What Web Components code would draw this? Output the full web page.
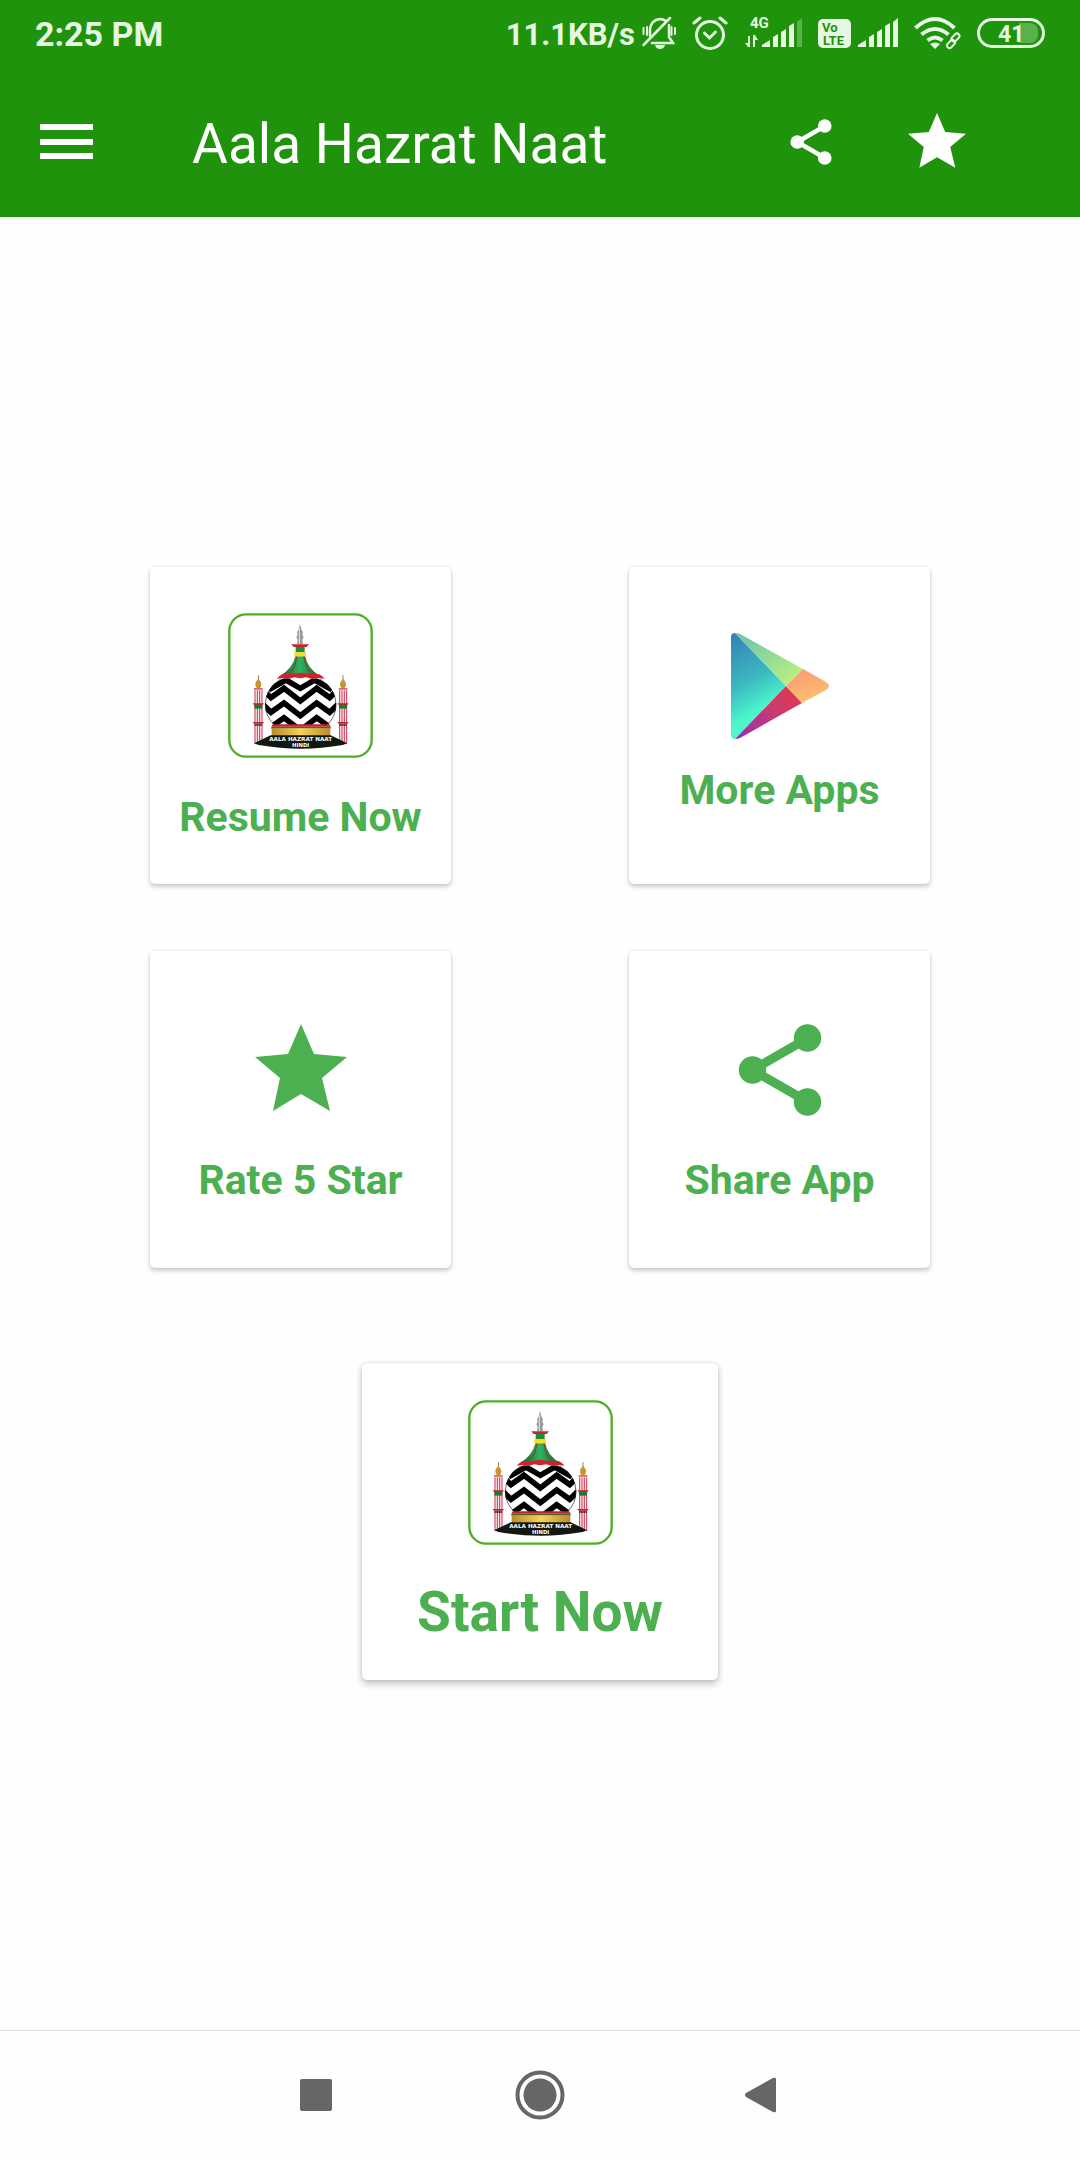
<!DOCTYPE html>
<html lang="en">
<head>
<meta charset="utf-8">
<meta name="viewport" content="width=device-width, initial-scale=1">
<title>Aala Hazrat Naat</title>
<style>
    html, body {
        margin: 0;
        height: 100%;
    }
    body {
        background: #fefefe;
        font-family: Roboto, "Noto Sans", sans-serif;
    }
</style>
</head>
<body>
<home-screen></home-screen>

<script>
const STAR = '<path d="M46 0l13 30 33 3-25 21 8 33-29-17-28 17 7-33L0 33l33-3z"/>';

const SHARE = `
    <path d="M18.500 46L74 14M18.500 46L74 78" stroke="currentColor" stroke-width="9" fill="none"/>
    <circle cx="18.500" cy="46" r="13.700"/>
    <circle cx="73.500" cy="14" r="13.700"/>
    <circle cx="73.500" cy="78" r="13.700"/>`;

const SIGNAL = `
    <path d="M0 29v-2l8-5v7z"/>
    <path d="M11 29V19l5-3v13z"/>
    <path d="M19 29V14l5-3v18z"/>
    <path d="M27 29V8l5-3v24z"/>`;

/**
 * Status bar: clock on the left, network and battery on the right
 */
class StatusBar extends HTMLElement {
    constructor() {
        super();
        this.attachShadow({ mode: 'open' });
    }

    connectedCallback() {
        this.shadowRoot.innerHTML = `
            <style>
                :host {
                    display: flex;
                    align-items: center;
                    justify-content: space-between;
                    height: 66px;
                    padding: 0 35px;
                    background: #1e930b;
                    color: #e6f8e2;
                    font-weight: 700;
                    white-space: nowrap;
                }
                .clock, .speed { padding-top: 2px; }
                .clock { font-size: 34px; }
                .speed { font-size: 31px; }
                .tray, .group {
                    display: flex;
                    align-items: center;
                }
                .tray { gap: 16px; }
                .group { gap: 7px; }
                svg {
                    display: block;
                    fill: currentColor;
                    font-family: Roboto, sans-serif;
                }
            </style>
            <span class="clock">2:25 PM</span>
            <div class="tray">
                <div class="group">
                    <span class="speed">11.1KB/s</span>
                    <svg width="34" height="34" viewBox="0 0 34 34" aria-label="Silent">
                        <g fill="none" stroke="currentColor" stroke-width="2.500" stroke-linecap="round">
                            <path d="M8 20v-7q1-9 10-10 3 0 6 2M27 9v12l4 6H10"/>
                            <path d="M1.500 29L28 2"/>
                            <path d="M1.500 12v6M5 11v8M29.500 11v8M33 12v6" stroke-width="2"/>
                        </g>
                        <path d="M13 29h10q-1 4-5 4t-5-4z"/>
                    </svg>
                </div>
                <svg width="36" height="34" viewBox="0 0 36 34" aria-label="Alarm">
                    <g fill="none" stroke="currentColor" stroke-width="3" stroke-linecap="round">
                        <circle cx="18" cy="19" r="13.500"/>
                        <path d="M2 7l6-5M34 7l-6-5"/>
                        <path d="M12.500 17l5 5 6-6"/>
                    </g>
                </svg>
                <svg width="58" height="42" viewBox="-1 -4 58 42" aria-label="Mobile network">
                    <text x="5" y="12" font-size="15" font-weight="700">4G</text>
                    <path d="M3 20h2v11H3l-3-4h3zM8 31V19h2l3 5h-3v7z"/>
                    <g transform="translate(17 2)">${SIGNAL}<path d="M35 29V4l5-4v29z" opacity=".3"/></g>
                </svg>
                <div class="group">
                    <svg width="33" height="34" viewBox="0 0 33 34" aria-label="VoLTE">
                        <rect y="3" width="33" height="29" rx="5"/>
                        <g fill="#1e930b" font-size="13" font-weight="700">
                            <text x="4" y="16">Vo</text>
                            <text x="5" y="29">LTE</text>
                        </g>
                    </svg>
                    <svg width="40" height="34" viewBox="0 -2 40 34" aria-label="Signal">${SIGNAL}<path d="M35 29V4l5-4v29z"/></svg>
                </div>
                <svg width="47" height="34" viewBox="0 0 47 34" aria-label="Wi-Fi">
                    <g fill="none" stroke="currentColor" stroke-width="4">
                        <path d="M1.500 12Q21-6 40.500 12"/>
                        <path d="M7.500 18.500q13.500-11 27 0"/>
                        <path d="M13.500 24.500q7.500-6 15 0"/>
                    </g>
                    <path d="M16 28q5-3 10 0l-5 5z"/>
                    <path d="M33 30l12-13" fill="none" stroke="#1e930b" stroke-width="9"/>
                    <g fill="none" stroke="currentColor" stroke-width="2">
                        <rect x="-4.500" y="-2.500" width="9" height="5" rx="2.500" transform="translate(37 28) rotate(-45)"/>
                        <rect x="-4.500" y="-2.500" width="9" height="5" rx="2.500" transform="translate(41.500 21.500) rotate(-45)"/>
                    </g>
                </svg>
                <svg width="68" height="34" viewBox="0 0 68 34" aria-label="Battery">
                    <rect x="1.500" y="3.500" width="65" height="27" rx="13.500" fill="none" stroke="currentColor" stroke-width="3"/>
                    <path d="M42 7h11a8 8 0 0 1 8 8v4a8 8 0 0 1-8 8H42z" opacity=".3"/>
                    <text x="21" y="26" font-size="23" font-weight="700">41</text>
                </svg>
            </div>
        `;
    }
}
customElements.define('status-bar', StatusBar);

/**
 * App bar: menu, slotted title, share and rate actions
 */
class AppBar extends HTMLElement {
    constructor() {
        super();
        this.attachShadow({ mode: 'open' });
    }

    connectedCallback() {
        this.shadowRoot.innerHTML = `
            <style>
                :host {
                    display: flex;
                    align-items: center;
                    height: 151px;
                    padding: 0 80px 0 0;
                    background: #1e930b;
                    color: #fff;
                }
                button {
                    display: flex;
                    align-items: center;
                    justify-content: center;
                    width: 126px;
                    height: 126px;
                    padding: 0;
                    border: 0;
                    background: none;
                    color: inherit;
                    cursor: pointer;
                }
                .menu { width: 133px; }
                svg { fill: currentColor; }
                h1 {
                    flex: 1;
                    margin: 0;
                    padding: 4px 0 0 59px;
                    font-size: 55px;
                    font-weight: 400;
                    white-space: nowrap;
                }
            </style>
            <button class="menu" aria-label="Menu">
                <svg width="53" height="36" viewBox="0 0 53 36"><path d="M0 0h53v6H0zM0 15h53v6H0zM0 29h53v6H0z"/></svg>
            </button>
            <h1><slot></slot></h1>
            <button aria-label="Share">
                <svg width="46" height="46" viewBox="0 0 92 92">${SHARE}</svg>
            </button>
            <button aria-label="Rate">
                <svg width="58" height="58" viewBox="0 0 92 92">${STAR}</svg>
            </button>
        `;
    }
}
customElements.define('app-bar', AppBar);

/**
 * App logo: striped dome between two minarets
 */
class AppLogo extends HTMLElement {
    constructor() {
        super();
        this.attachShadow({ mode: 'open' });
    }

    minaret(x) {
        return `
            <g transform="translate(${x} 0)">
                <path d="M-1 225h2v16h-2z" fill="#54452a"/>
                <path d="M-9 252q0-8 9-17 9 9 9 17 0 9-5 11H-4q-5-2-5-11z" fill="#c8952f"/>
                <path d="M-13 264h26v4h-26z" fill="#c81e2e"/>
                <path d="M-11 268h22v43h-22zM-11 325h22v41h-22zM-12 378h24v52l-10-8-14 6z" fill="#fbe9ec"/>
                <path d="M-10 270v160M-3 270v155M4 270v155M11 270v160" stroke="#cf3550" stroke-width="3"/>
                <path d="M-17 309h34l-4 5h-26zM-17 365h34l-4 5h-26z" fill="#c81e2e"/>
                <path d="M-12 313h24v12h-24z" fill="#1d7a2c"/>
                <path d="M-12 372h24v4h-24z" fill="#222"/>
            </g>`;
    }

    connectedCallback() {
        // y is the height of the peaks of each zigzag band
        const bands = [264, 308, 352].map(y =>
            `<path d="M130 ${y - 8}L167 ${y + 28}L206 ${y}L255 ${y + 38}L304 ${y}L343 ${y + 28}L380 ${y - 8}"/>`
        ).join('');

        this.shadowRoot.innerHTML = `
            <style>
                :host { display: block; }
                svg { display: block; }
            </style>
            <svg width="145" height="145" viewBox="38 38 435 435" role="img" aria-label="Aala Hazrat Naat Hindi">
                <defs>
                    <clipPath id="dome"><path d="M196 234h118q49 32 49 78 0 38-26 62H176q-27-24-27-62 0-46 47-78z"/></clipPath>
                    <linearGradient id="roof">
                        <stop offset="0" stop-color="#185c28"/>
                        <stop offset=".5" stop-color="#2bb560"/>
                        <stop offset="1" stop-color="#185c28"/>
                    </linearGradient>
                    <linearGradient id="gold">
                        <stop offset="0" stop-color="#b98a2b"/>
                        <stop offset=".5" stop-color="#f6d358"/>
                        <stop offset="1" stop-color="#b98a2b"/>
                    </linearGradient>
                </defs>
                <rect x="42" y="42" width="427" height="427" rx="50" fill="#fff" stroke="#4fae27" stroke-width="7"/>
                ${this.minaret(129)}
                ${this.minaret(383)}
                <g clip-path="url(#dome)">
                    <path d="M140 230h230v150H140z" fill="#fff"/>
                    <g fill="none" stroke="#000" stroke-width="17">
                        <path d="M160 268l52-29 43 25 43-25 52 29"/>
                        ${bands}
                    </g>
                </g>
                <path d="M196 236q-46 32-46 76 0 36 26 60M314 236q48 32 48 76 0 36-25 60" fill="none" stroke="#222" stroke-width="2"/>
                <path d="M254 72l5 18 4 5-2 8 4 8-4 8 2 13h-18l2-13-4-8 4-8-2-8 4-5z" fill="#999"/>
                <path d="M252 82v48" stroke="#e8e8e8" stroke-width="3"/>
                <path d="M228 132h53l-7 8h-39z" fill="#cc2230"/>
                <path d="M241 140h27v16h-27z" fill="#1d8a3a"/>
                <path d="M240 168h30q7 38 43 58l-30-2-28-4-28 4-32 2q36-20 45-58z" fill="url(#roof)"/>
                <path d="M244 168q-3 34-23 56M266 168q5 34 23 56" fill="none" stroke="#a32a25" stroke-width="3"/>
                <path d="M237 154l7 3 5-3 6 3 6-3 5 3 6-3-1 14h-34z" fill="#f2de1c"/>
                <path d="M184 235q7-8 18-14l26 1 27-5 28 5 27-1q12 6 18 14l-20-2-17 3-19-5-17 3-18-3-18 5-17-3z" fill="#d3202f"/>
                <path d="M172 372h170l4 7H168z" fill="#c81e2e"/>
                <path d="M168 379h178v6H168z" fill="#50612b"/>
                <path d="M169 384h176v24H169z" fill="url(#gold)"/>
                <path d="M166 405h180l50 24-14 5q-124 22-252 0l-14-5z" fill="#111812"/>
                <g fill="#fff" font-family="'DejaVu Sans', sans-serif" font-weight="700" text-anchor="middle">
                    <text x="256" y="423" font-size="17">AALA HAZRAT NAAT</text>
                    <text x="256" y="440" font-size="16">HINDI</text>
                </g>
            </svg>
        `;
    }
}
customElements.define('app-logo', AppLogo);

/**
 * Card button. Slots: icon, default (label)
 */
class ActionCard extends HTMLElement {
    constructor() {
        super();
        this.attachShadow({ mode: 'open' });
    }

    connectedCallback() {
        this.shadowRoot.innerHTML = `
            <style>
                :host {
                    display: block;
                    min-width: 301px;
                }
                :host([wide]) { min-width: 356px; }
                button {
                    display: flex;
                    flex-direction: column;
                    align-items: center;
                    gap: var(--card-gap, 35px);
                    box-sizing: border-box;
                    width: 100%;
                    min-height: 317px;
                    padding: var(--card-top, 46px) 20px 32px;
                    border: 0;
                    border-radius: 5px;
                    background: #fff;
                    box-shadow: 0 3px 5px rgba(0, 0, 0, 0.18), 0 0 3px rgba(0, 0, 0, 0.12);
                    color: #4caf50;
                    font: 700 41px/48px Roboto, sans-serif;
                    white-space: nowrap;
                    cursor: pointer;
                }
                :host([wide]) button {
                    font-size: 55px;
                    line-height: 64px;
                    box-shadow: 0 4px 7px rgba(0, 0, 0, 0.22), 0 0 4px rgba(0, 0, 0, 0.12);
                }
                ::slotted(svg) {
                    display: block;
                    fill: currentColor;
                }
            </style>
            <button>
                <slot name="icon"></slot>
                <span><slot></slot></span>
            </button>
        `;
    }
}
customElements.define('action-card', ActionCard);

/**
 * System navigation bar
 */
class NavBar extends HTMLElement {
    constructor() {
        super();
        this.attachShadow({ mode: 'open' });
    }

    connectedCallback() {
        this.shadowRoot.innerHTML = `
            <style>
                :host {
                    display: flex;
                    justify-content: center;
                    height: 127px;
                    padding-bottom: 2px;
                    border-top: 1px solid #e2e2e2;
                    color: #666;
                }
                button {
                    display: flex;
                    align-items: center;
                    justify-content: center;
                    width: 224px;
                    padding: 0;
                    border: 0;
                    background: none;
                    color: inherit;
                }
                svg { fill: currentColor; }
            </style>
            <button aria-label="Recent apps">
                <svg width="32" height="32" viewBox="0 0 32 32"><rect width="32" height="32" rx="2"/></svg>
            </button>
            <button aria-label="Home">
                <svg width="50" height="50" viewBox="0 0 50 50">
                    <circle cx="25" cy="25" r="22.500" fill="none" stroke="currentColor" stroke-width="4"/>
                    <circle cx="25" cy="25" r="16.500"/>
                </svg>
            </button>
            <button aria-label="Back">
                <svg width="40" height="36" viewBox="0 0 40 36"><path d="M2 16L29 1q3-1 3 1v32q0 2-3 1L2 20q-2-2 0-4z"/></svg>
            </button>
        `;
    }
}
customElements.define('nav-bar', NavBar);

class HomeScreen extends HTMLElement {
    constructor() {
        super();
        this.attachShadow({ mode: 'open' });
    }

    connectedCallback() {
        this.shadowRoot.innerHTML = `
            <style>
                :host {
                    display: flex;
                    flex-direction: column;
                    min-height: 100vh;
                }
                main {
                    flex: 1;
                    display: flex;
                    flex-direction: column;
                    align-items: center;
                    justify-content: center;
                    gap: 95px;
                }
                .grid {
                    display: grid;
                    grid-template-columns: 1fr 1fr;
                    justify-items: center;
                    row-gap: 67px;
                    box-sizing: border-box;
                    width: 100%;
                    padding: 0 61px;
                }
                .play { --card-top: 66px; --card-gap: 27px; }
                .glyph { --card-top: 73px; --card-gap: 40px; }
                .start { --card-top: 37px; }
            </style>
            <status-bar></status-bar>
            <app-bar>Aala Hazrat Naat</app-bar>
            <main>
                <div class="grid">
                    <action-card>
                        <app-logo slot="icon"></app-logo>
                        Resume Now
                    </action-card>
                    <action-card class="play">
                        <svg slot="icon" width="98" height="106" viewBox="0 0 98 106">
                            <defs>
                                <linearGradient id="blue" x2=".3" y2="1">
                                    <stop offset="0" stop-color="#347fb5"/>
                                    <stop offset=".5" stop-color="#3cb8c0"/>
                                    <stop offset=".8" stop-color="#4bf5cb"/>
                                    <stop offset="1" stop-color="#5cf5d0"/>
                                </linearGradient>
                                <linearGradient id="lime" x2="1" y2="1">
                                    <stop offset="0" stop-color="#67c4ae"/>
                                    <stop offset="1" stop-color="#c5f57c"/>
                                </linearGradient>
                                <linearGradient id="pink" x1="1" x2="0" y2="1">
                                    <stop offset="0" stop-color="#e2384a"/>
                                    <stop offset=".4" stop-color="#cd3b6c"/>
                                    <stop offset="1" stop-color="#9a2bbb"/>
                                </linearGradient>
                                <linearGradient id="peach" x2=".4" y2="1">
                                    <stop offset="0" stop-color="#fb9479"/>
                                    <stop offset="1" stop-color="#fbc06d"/>
                                </linearGradient>
                            </defs>
                            <path d="M0 4q0-4 4-4l51 53L4 106q-4 0-4-4z" fill="url(#blue)"/>
                            <path d="M4 0q3 0 5 1l63 35-17 17z" fill="url(#lime)"/>
                            <path d="M4 106q3 0 5-1l62-35-16-17z" fill="url(#pink)"/>
                            <path d="M72 36l23 13q6 4 0 8L71 70 55 53z" fill="url(#peach)"/>
                        </svg>
                        More Apps
                    </action-card>
                    <action-card class="glyph">
                        <svg slot="icon" width="92" height="92" viewBox="0 0 92 92">${STAR}</svg>
                        Rate 5 Star
                    </action-card>
                    <action-card class="glyph">
                        <svg slot="icon" width="92" height="92" viewBox="0 0 92 92">${SHARE}</svg>
                        Share App
                    </action-card>
                </div>
                <action-card class="start" wide>
                    <app-logo slot="icon"></app-logo>
                    Start Now
                </action-card>
            </main>
            <nav-bar></nav-bar>
        `;
    }
}
customElements.define('home-screen', HomeScreen);
</script>
</body>
</html>
